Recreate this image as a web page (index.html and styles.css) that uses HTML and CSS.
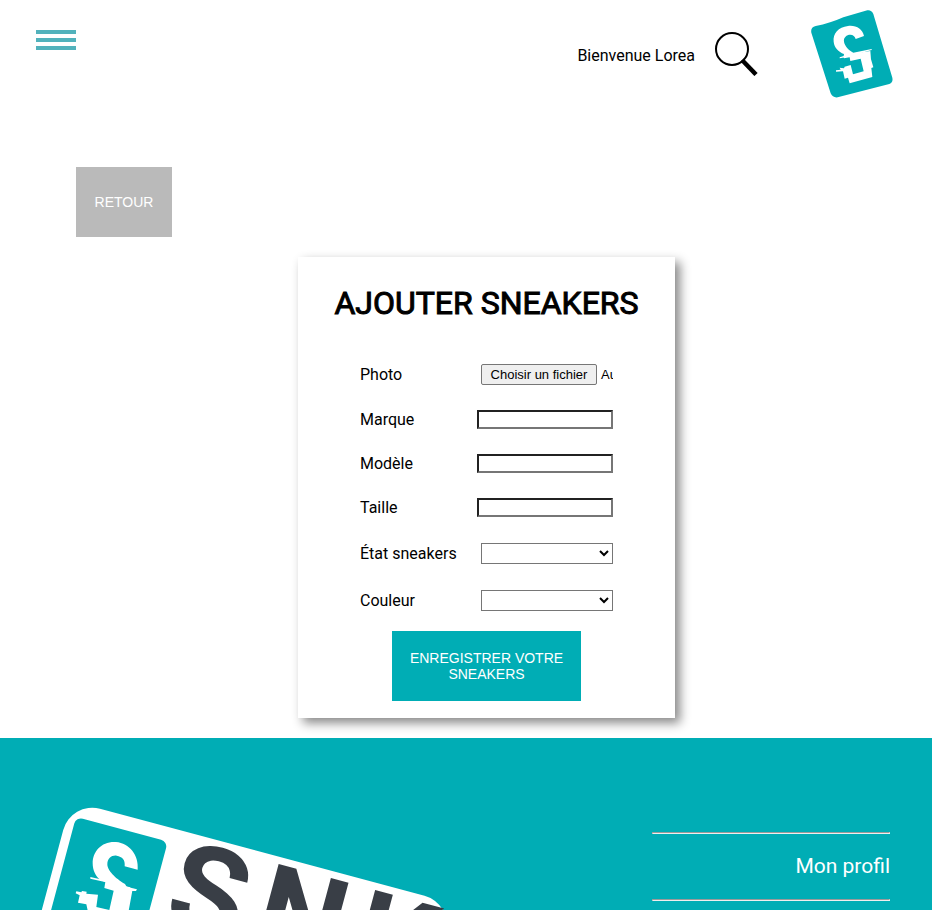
FILE: index.html
```html
<!DOCTYPE html>
<html lang="fr">
<head>
<meta charset="utf-8">
<meta name="viewport" content="width=device-width, initial-scale=1">
<title>Ajouter sneakers</title>
<link rel="stylesheet" href="styles.css">
</head>
<body>
<header class="topbar">
  <button class="burger" type="button" aria-label="Menu"><span></span><span></span><span></span></button>
  <div class="account">
    <p class="welcome">Bienvenue Lorea</p>
    <button class="search" type="button" aria-label="Rechercher">
      <svg width="44" height="44" viewBox="0 0 44 44" fill="none" stroke="#000"><circle cx="18" cy="17" r="16" stroke-width="2"/><path d="M28 28 42 42.500" stroke-width="4.500"/></svg>
    </button>
    <a class="brand" href="#" aria-label="Accueil">
      <svg width="84" height="88" viewBox="0 0 252 264">
        <path fill="#00adb5" d="M17 48Q60 40 100 22L172 1Q184-1 190 12L247 203Q250 217 238 222L83 262Q68 264 62 250L4 68Q1 52 17 48Z"/>
        <g fill="#fff" transform="translate(-30 -30)">
          <path d="M167 117 192 108C188 87 168 75 144 78C115 81 98 102 101 125C103 143 115 155 132 162L131 168 119 172V175L145 170 165 164 215 150V147L160 158C143 149 134 136 132 125C130 112 140 104 151 104C159 104 165 109 167 117Z"/>
          <path d="M130 170 165 160 211 153 213 178 220 202 214 204 217 231 149 250 144 233 134 236 129 214 108 215V211L122 209 119 203 132 205 134 200 152 195 159 223 191 214 182 176 151 183 149 172 132 175Z"/>
        </g>
      </svg>
    </a>
  </div>
</header>
<main class="page">
  <button class="btn btn-back" type="button">RETOUR</button>
  <section class="card">
    <h1>AJOUTER SNEAKERS</h1>
    <form class="form">
      <div class="row">
        <label for="photo">Photo</label>
        <div class="file">
          <span class="file-button">Choisir un fichier</span><span class="file-name">Aucun fichier choisi</span>
          <input id="photo" type="file">
        </div>
      </div>
      <div class="row"><label for="marque">Marque</label><input class="text" id="marque" type="text"></div>
      <div class="row"><label for="modele">Modèle</label><input class="text" id="modele" type="text"></div>
      <div class="row"><label for="taille">Taille</label><input class="text" id="taille" type="text"></div>
      <div class="row"><label for="etat">État sneakers</label><select id="etat"><option></option></select></div>
      <div class="row"><label for="couleur">Couleur</label><select id="couleur"><option></option></select></div>
      <button class="btn btn-save" type="submit">ENREGISTRER VOTRE SNEAKERS</button>
    </form>
  </section>
</main>
<footer class="footer">
  <svg class="footer-logo" width="440" height="260" viewBox="32 798 440 260" role="img" aria-label="SNK">
    <g transform="translate(71 801) rotate(15)">
      <rect width="396" height="150" rx="30" fill="#fff"/>
      <rect x="9" y="14" width="95" height="122" rx="7" fill="#00adb5"/>
      <text class="wordmark" y="96" x="119 209 309">SNK</text>
    </g>
    <g fill="#fff" transform="translate(70 830) scale(.3333)">
      <path d="M164 109 203 119C207 75 178 40 138 36C96 33 68 63 68 100C68 121 77 138 88 147L61 141V146L105 156 150 169 180 176 182 183 198 183 201 178 170 170 165 162C146 152 112 125 112 103C112 84 126 75 140 77C157 80 166 89 164 109Z"/>
      <path d="M84 147 180 172 187 182 171 270 55 250 49 223 24 218 29 196 17 190 19 184 34 187 36 183 50 185 49 191 84 194 79 231 118 240 131 182 103 174 106 156Z"/>
    </g>
  </svg>
  <nav class="links"><hr><a href="#">Mon profil</a><hr></nav>
</footer>
</body>
</html>
```
FILE: styles.css
```css
* { box-sizing: border-box; }
body {
  display: flex;
  flex-direction: column;
  height: 100vh;
  margin: 0;
  background: #fff;
  color: #000;
  font: 16px/19px Roboto, sans-serif;
}
button { padding: 0; border: 0; background: none; }
.topbar {
  display: flex;
  flex-shrink: 0;
  justify-content: space-between;
  align-items: flex-start;
  padding: 10px 38px 0 36px;
}
.burger { display: grid; gap: 4px; width: 40px; margin-top: 20px; }
.burger span { height: 4px; background: #52b2bc; }
.account { display: flex; align-items: flex-start; }
.welcome { margin: 36px 19px 0 0; }
.search { height: 44px; margin: 22px 52px 0 0; }
.search svg, .brand svg { display: block; }
.page { flex-shrink: 0; padding: 69px 0 20px 41px; }
.btn {
  display: block;
  height: 70px;
  color: #fff;
  font: 14px/16px "Liberation Sans", sans-serif;
}
.btn-back { width: 96px; margin: 0 0 20px 35px; background: #bababa; }
.card {
  width: 377px;
  margin: 0 auto;
  padding: 27px 0 17px;
  box-shadow: 5px 5px 10px #888;
}
h1 {
  margin: 0 0 41px;
  font-size: 32px;
  line-height: 38px;
  font-weight: 400;
  text-align: center;
  -webkit-text-stroke: 1px #000;
}
.form { display: flex; flex-direction: column; gap: 25px; padding: 0 62px; }
.row { display: flex; justify-content: space-between; align-items: center; height: 22px; }
.row:has(.text) { height: 19px; }
.text {
  width: 136px;
  height: 19px;
  padding: 0 2px;
  border: 2px solid;
  border-color: #212121 #767676 #767676 #212121;
  background: #fff;
}
select { width: 132px; height: 21px; border: 1px solid #767676; background: #fff; color: #000; }
.file {
  position: relative;
  display: flex;
  gap: 4px;
  width: 132px;
  overflow: hidden;
  font: 13px/19px "Liberation Sans", sans-serif;
  white-space: nowrap;
}
.file-button { flex-shrink: 0; width: 116px; border: 1px solid #767676; border-radius: 2px; background: #efefef; text-align: center; }
.file-name { padding: 1px 0; }
.file input { position: absolute; inset: 0; width: 100%; opacity: 0; }
.btn-save { align-self: center; width: 189px; margin-top: -5px; padding: 0 16px; background: #00adb5; }
.footer {
  display: flex;
  flex: 1 1 0;
  justify-content: space-between;
  align-items: flex-start;
  min-height: 0;
  padding: 60px 42px 0 32px;
  overflow: hidden;
  background: #00adb5;
}
.footer-logo { flex-shrink: 0; }
.wordmark { fill: #393e46; font: 700 125px Roboto, sans-serif; }
.links { display: flex; flex-direction: column; width: 238px; padding-top: 34px; font-size: 21px; line-height: 25px; }
.links hr { width: 100%; height: 2px; margin: 0; border: 1px solid; border-color: #9a9a9a #eee #eee #9a9a9a; }
.links a { margin: 20px 0; color: #fff; text-align: right; text-decoration: none; }
```
